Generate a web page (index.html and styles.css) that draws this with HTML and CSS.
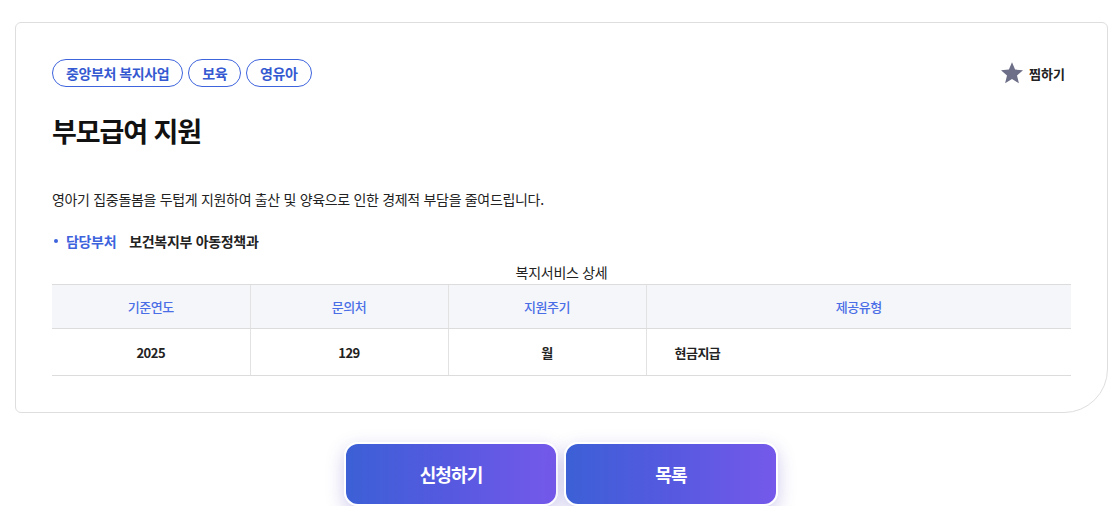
FILE: index.html
```html
<!DOCTYPE html>
<html lang="ko">
<head>
<meta charset="utf-8">
<title>부모급여 지원</title>
<link rel="stylesheet" href="styles.css">
</head>
<body>
<div class="page">
  <section class="card">
    <div class="card-head">
      <ul class="tags">
        <li class="tag">중앙부처 복지사업</li>
        <li class="tag">보육</li>
        <li class="tag">영유아</li>
      </ul>
      <button class="like" type="button">
        <svg class="star" viewBox="0 0 24 24" width="24" height="24" aria-hidden="true"><path d="M12 1.2l3.1 7.4 7.9.6-6 5.2 1.9 7.8L12 18l-6.9 4.2L7 14.4 1 9.2l7.9-.6z" fill="#6c6f87"/></svg>
        <span>찜하기</span>
      </button>
    </div>
    <h1 class="title">부모급여 지원</h1>
    <p class="desc">영아기 집중돌봄을 두텁게 지원하여 출산 및 양육으로 인한 경제적 부담을 줄여드립니다.</p>
    <ul class="info">
      <li><span class="info-label">담당부처</span><span class="info-value">보건복지부 아동정책과</span></li>
    </ul>
    <table class="detail">
      <caption>복지서비스 상세</caption>
      <thead>
        <tr><th>기준연도</th><th>문의처</th><th>지원주기</th><th class="wide">제공유형</th></tr>
      </thead>
      <tbody>
        <tr><td>2025</td><td>129</td><td>월</td><td class="left">현금지급</td></tr>
      </tbody>
    </table>
  </section>
  <div class="actions">
    <a class="btn" href="#">신청하기</a>
    <a class="btn" href="#">목록</a>
  </div>
</div>
</body>
</html>
```

FILE: styles.css
```css
* { box-sizing: border-box; }
html, body { margin: 0; padding: 0; background: #fff; }
body {
  font-family: "Noto Sans CJK KR", "Noto Sans", sans-serif;
  color: #222;
  letter-spacing: -0.02em;
}
.page {
  padding: 22px 8px 0 15px;
}
.card {
  border: 1px solid #dedede;
  border-radius: 6px 6px 44px 6px;
  padding: 36px 36px 36px 36px;
  background: #fff;
}
.card-head {
  display: flex;
  align-items: center;
  justify-content: space-between;
}
.tags {
  list-style: none;
  margin: 0;
  padding: 0;
  display: flex;
  gap: 5px;
}
.tag {
  height: 28px;
  line-height: 26px;
  padding: 0 13px;
  border: 1px solid #3d63dd;
  border-radius: 14px;
  color: #3559d1;
  font-size: 14px;
  font-weight: 600;
  letter-spacing: -0.03em;
}
.like {
  display: flex;
  align-items: center;
  gap: 5px;
  background: none;
  border: 0;
  padding: 0;
  margin-right: 6px;
  font-family: inherit;
  letter-spacing: 0;
  font-size: 13px;
  font-weight: 700;
  color: #222;
  cursor: pointer;
}
.star { display: block; }
.title {
  margin: 24px 0 0;
  font-size: 27px;
  line-height: 40px;
  font-weight: 700;
  color: #111;
  letter-spacing: -0.04em;
}
.desc {
  margin: 38px 0 0;
  font-size: 14px;
  line-height: 20px;
  color: #222;
}
.info {
  list-style: none;
  margin: 22px 0 0;
  padding: 0;
}
.info li {
  display: flex;
  align-items: center;
  font-size: 14px;
  line-height: 20px;
  font-weight: 600;
}
.info li::before {
  content: "";
  width: 4px;
  height: 4px;
  border-radius: 50%;
  background: #3d63dd;
  margin: 0 8px 0 2px;
}
.info-label { color: #3d63dd; font-weight: 700; margin-right: 13px; }
.info-value { color: #222; }
.detail {
  width: 100%;
  margin-top: 11px;
  border-collapse: collapse;
  table-layout: fixed;
  font-size: 13px;
  letter-spacing: -0.04em;
}
.detail caption {
  font-size: 14px;
  line-height: 20px;
  color: #222;
  padding-bottom: 2px;
  letter-spacing: -0.02em;
}
.detail th {
  height: 44px;
  background: #f5f6fa;
  color: #4a6ee6;
  font-weight: 500;
  border-top: 1px solid #dcdcdc;
  border-bottom: 1px solid #dcdcdc;
  border-left: 1px solid #e2e2e2;
  width: 198px;
}
.detail th.wide { width: auto; }
.detail th:first-child, .detail td:first-child { border-left: 0; }
.detail td {
  height: 47px;
  text-align: center;
  font-weight: 600;
  color: #222;
  border-bottom: 1px solid #dcdcdc;
  border-left: 1px solid #e2e2e2;
}
.detail td.left { text-align: left; padding-left: 28px; }
.actions {
  display: flex;
  justify-content: center;
  gap: 6px;
  margin-top: 29px;
  padding-right: 1px;
}
.btn {
  width: 214px;
  height: 64px;
  display: flex;
  align-items: center;
  justify-content: center;
  border: 2px solid #fff;
  border-radius: 14px;
  background: linear-gradient(90deg, #3c60d6 0%, #5659e0 50%, #7559ea 100%);
  color: #fff;
  font-size: 18px;
  font-weight: 700;
  letter-spacing: -0.05em;
  text-decoration: none;
  box-shadow: 0 6px 18px rgba(80, 70, 190, 0.28);
}
```
